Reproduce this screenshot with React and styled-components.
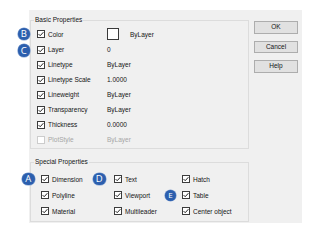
import React from "react";
import styled, { createGlobalStyle } from "styled-components";

const GlobalStyle = createGlobalStyle`
  html, body {
    margin: 0;
    padding: 0;
    background: #ffffff;
  }
  body {
    font-family: "Liberation Sans", Arial, sans-serif;
    font-size: 6.5px;
    color: #141414;
  }
`;

const basicRows = [
  { label: "Color", value: "ByLayer", swatch: true, badge: "B" },
  { label: "Layer", value: "0", badge: "C", badgeShift: 1 },
  { label: "Linetype", value: "ByLayer" },
  { label: "Linetype Scale", value: "1.0000" },
  { label: "Lineweight", value: "ByLayer" },
  { label: "Transparency", value: "ByLayer" },
  { label: "Thickness", value: "0.0000" },
  { label: "PlotStyle", value: "ByLayer", disabled: true },
];

const specialItems = [
  { label: "Dimension", badge: "A", badgeLeft: -19 },
  { label: "Text", badge: "D", badgeLeft: -21 },
  { label: "Hatch" },
  { label: "Polyline" },
  { label: "Viewport" },
  { label: "Table", badge: "E", badgeLeft: -17, small: true },
  { label: "Material" },
  { label: "Multileader" },
  { label: "Center object" },
];

const CheckBox = ({ disabled }) => (
  <CheckIcon width="8" height="8" viewBox="0 0 8 8">
    <rect
      x="0.5"
      y="0.5"
      width="7"
      height="7"
      fill="#ffffff"
      stroke={disabled ? "#cccccc" : "#3c3c3c"}
    />
    {!disabled && (
      <path
        d="M1.6 4.1 L3.2 5.7 L6.4 2.2"
        fill="none"
        stroke="#222222"
        strokeWidth="1"
      />
    )}
  </CheckIcon>
);

const App = () => {
  return (
    <>
      <GlobalStyle />
      <Dialog>
        <Groups>
          <Group $padLeft={6} $padTop={2} $padBottom={1}>
            <Legend $shift={-3}>Basic Properties</Legend>
            {basicRows.map((row, i) => (
              <BasicRow key={row.label} $tall={i === 0}>
                {row.badge && (
                  <Badge $left={-19.5} $shift={row.badgeShift || 0}>
                    {row.badge}
                  </Badge>
                )}
                <CheckLabel $disabled={row.disabled}>
                  <CheckBox disabled={row.disabled} />
                  {row.label}
                </CheckLabel>
                <Value $disabled={row.disabled}>
                  {row.swatch && <Swatch />}
                  {row.value}
                </Value>
              </BasicRow>
            ))}
          </Group>
          <Group $padLeft={10} $padTop={5} $padBottom={2}>
            <Legend $shift={-7}>Special Properties</Legend>
            <SpecialGrid>
              {specialItems.map((item) => (
                <SpecialCell key={item.label}>
                  {item.badge && (
                    <Badge $left={item.badgeLeft} $small={item.small}>
                      {item.badge}
                    </Badge>
                  )}
                  <CheckLabel>
                    <CheckBox />
                    {item.label}
                  </CheckLabel>
                </SpecialCell>
              ))}
            </SpecialGrid>
          </Group>
        </Groups>
        <Buttons>
          <Button>OK</Button>
          <Button>Cancel</Button>
          <Button>Help</Button>
        </Buttons>
      </Dialog>
    </>
  );
};

const Dialog = styled.div`
  display: flex;
  margin: 10px 0 0 29px;
  width: 273px;
  height: 213px;
  background: #f0f0f0;
  box-sizing: border-box;
`;

const Groups = styled.div`
  display: flex;
  flex-direction: column;
  gap: 9px;
  width: 220px;
  padding: 6px 0 0 1px;
  box-sizing: border-box;
`;

const Group = styled.fieldset`
  margin: 0;
  min-width: 0;
  border: 1px solid #dcdcdc;
  padding: ${(p) => p.$padTop}px 0 ${(p) => p.$padBottom}px
    ${(p) => p.$padLeft}px;
`;

const Legend = styled.legend`
  padding: 0 1px;
  margin-left: ${(p) => p.$shift}px;
  line-height: 8px;
  font-size: 6.5px;
  color: #141414;
`;

const BasicRow = styled.div`
  position: relative;
  display: grid;
  grid-template-columns: 70px 1fr;
  align-items: center;
  height: ${(p) => (p.$tall ? 16 : 15)}px;
`;

const CheckLabel = styled.div`
  display: flex;
  align-items: center;
  gap: 3px;
  white-space: nowrap;
  color: ${(p) => (p.$disabled ? "#a6a6a6" : "#141414")};
`;

const CheckIcon = styled.svg`
  display: block;
  flex: none;
`;

const Value = styled.div`
  display: flex;
  align-items: center;
  gap: 11px;
  white-space: nowrap;
  color: ${(p) => (p.$disabled ? "#a6a6a6" : "#141414")};
`;

const Swatch = styled.span`
  display: block;
  width: 12px;
  height: 12px;
  box-sizing: border-box;
  background: #ffffff;
  border: 1px solid #3a3a3a;
`;

const SpecialGrid = styled.div`
  display: grid;
  grid-template-columns: 73px 68px 1fr;
  grid-auto-rows: 16px;
`;

const SpecialCell = styled.div`
  position: relative;
  display: flex;
  align-items: center;
`;

const Badge = styled.span`
  position: absolute;
  left: ${(p) => p.$left}px;
  top: 50%;
  width: ${(p) => (p.$small ? 11 : 12.5)}px;
  height: ${(p) => (p.$small ? 11 : 12.5)}px;
  margin-top: ${(p) => (p.$small ? -5.5 : -6.25) + (p.$shift || 0)}px;
  border-radius: 50%;
  background: #2c5fae;
  box-shadow: 0 0 0 0.6px #7f9fd0;
  color: #ffffff;
  display: flex;
  align-items: center;
  justify-content: center;
  font-family: "Open Sans", "Liberation Sans", sans-serif;
  font-size: ${(p) => (p.$small ? 8 : 9.5)}px;
  line-height: 1;
`;

const Buttons = styled.div`
  display: flex;
  flex-direction: column;
  gap: 7px;
  padding: 11px 0 0 5px;
`;

const Button = styled.button`
  width: 44px;
  height: 12.5px;
  padding: 0;
  margin: 0;
  background: #e1e1e1;
  border: 1px solid #adadad;
  border-radius: 0;
  font-family: "Liberation Sans", Arial, sans-serif;
  font-size: 6.5px;
  color: #141414;
  line-height: 1;
`;

export default App;
